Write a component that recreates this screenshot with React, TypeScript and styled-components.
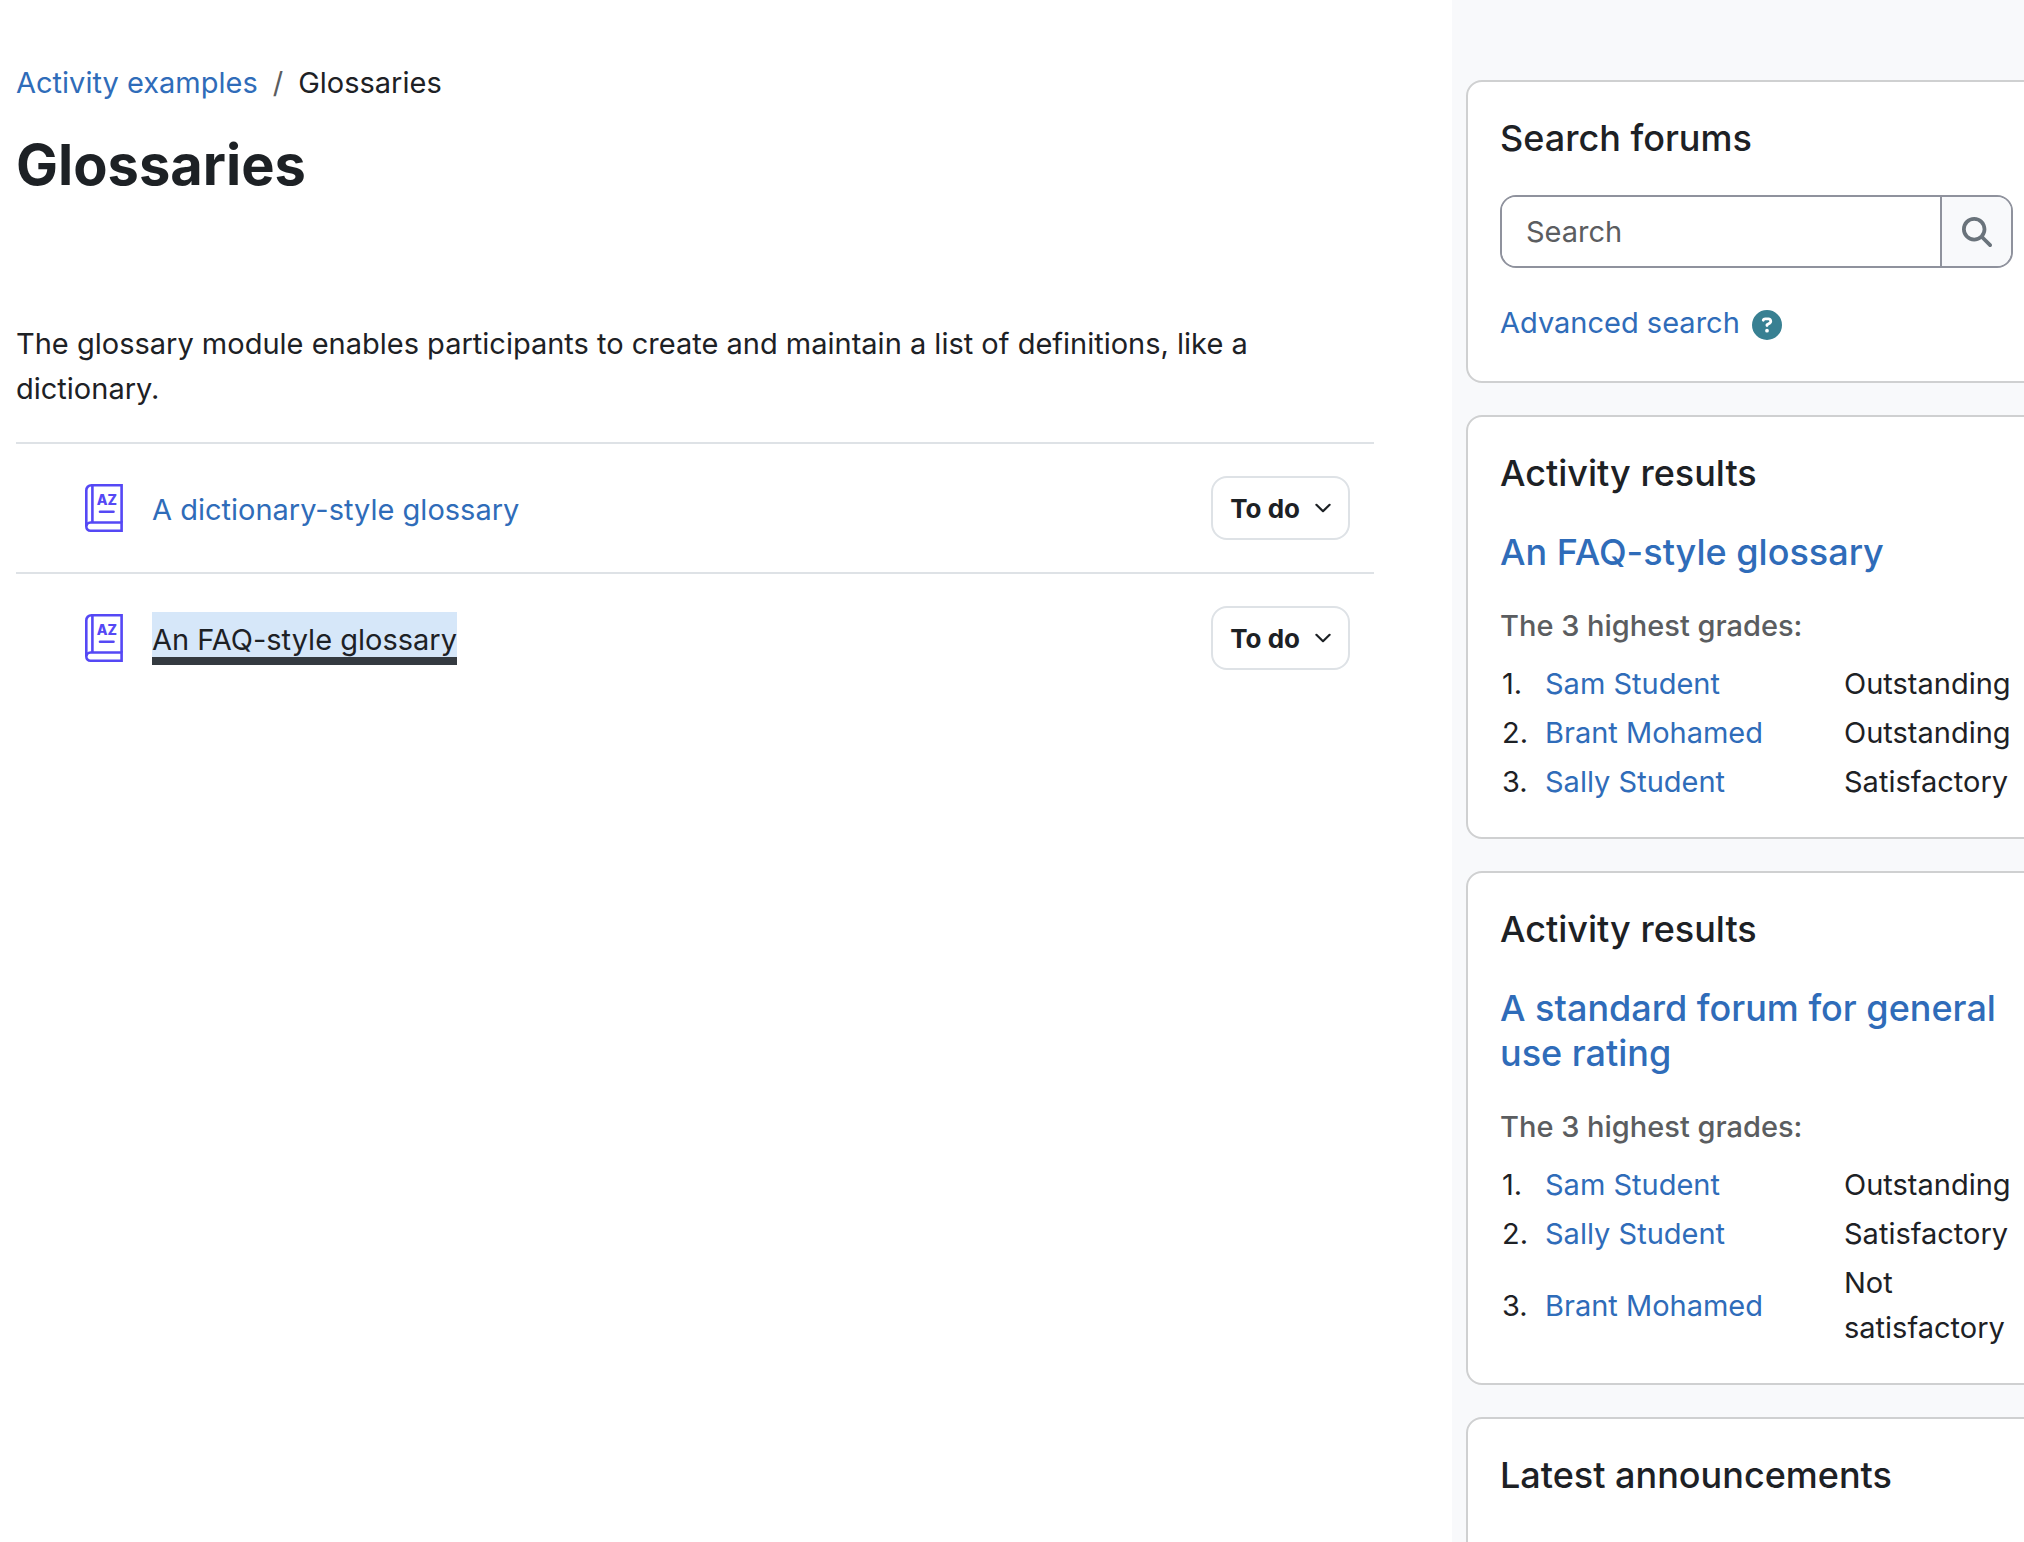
import React from "react";
import styled, { createGlobalStyle, css } from "styled-components";
import { FaCircleQuestion, FaMagnifyingGlass } from "react-icons/fa6";

const color = {
  text: "#1d2125",
  muted: "#5b5d60",
  link: "#2f6cb9",
  line: "#dee2e6",
  cardLine: "#cfd0d1",
  inputLine: "#8f929d",
  drawer: "#f8f9fb",
  activity: "#5548f5",
  help: "#388092",
};

const GlobalStyle = createGlobalStyle`
  *, *::before, *::after { box-sizing: border-box; }
  body {
    margin: 0;
    background: #fff;
    color: ${color.text};
    font-family: Inter, "Liberation Sans", sans-serif;
    font-size: 29px;
    line-height: 45px;
  }
  button, input { font: inherit; color: inherit; }
`;

const Page = styled.div`
  display: flex;
  align-items: stretch;
  height: 100vh;
  overflow: hidden;
`;

const Main = styled.main`
  flex: 1 1 0;
  min-width: 0;
  padding: 60px 78px 0 16px;
`;

const Link = styled.a`
  color: ${color.link};
  text-decoration: none;
`;

const Breadcrumb = styled.ol`
  display: flex;
  gap: 15px;
  margin: 0;
  padding: 0;
  list-style: none;

  li {
    display: flex;
    gap: 15px;
  }
  li + li::before {
    content: "/";
    color: ${color.muted};
  }
`;

const PageTitle = styled.h1`
  margin: 26px 0 0;
  font-size: 56px;
  line-height: 68px;
  font-weight: 700;
`;

const Intro = styled.p`
  margin: 122px 0 31px;
`;

const ActivityList = styled.ul`
  margin: 0;
  padding: 0;
  list-style: none;
`;

const ActivityRow = styled.li`
  display: flex;
  align-items: center;
  min-height: 130px;
  padding: 0 24px 0 69px;
  border-top: 2px solid ${color.line};
`;

const ActivityName = styled.div`
  flex: 1;
  margin-left: 29px;
  padding-top: 2px;
`;

const ActivityLink = styled(Link)<{ $focused?: boolean }>`
  ${({ $focused }) =>
    $focused &&
    css`
      color: ${color.text};
      background: #d6e7f9;
      box-shadow: 0 -10px #d6e7f9, 0 8px #343a40;
    `}
`;

const TodoButton = styled.button`
  display: flex;
  align-items: center;
  gap: 15px;
  height: 64px;
  padding: 0 17px;
  border: 2px solid ${color.line};
  border-radius: 16px;
  background: #fff;
  font-size: 26px;
  font-weight: 700;
`;

const Drawer = styled.aside`
  display: flex;
  flex-direction: column;
  flex: 0 0 572px;
  min-width: 0;
  gap: 32px;
  padding: 80px 0 0 14px;
  background: ${color.drawer};
`;

const Card = styled.section`
  flex: none;
  margin-right: -23px;
  padding: 34px 32px 31px;
  border: 2px solid ${color.cardLine};
  border-radius: 16px;
  background: #fff;
`;

const CardTitle = styled.h2`
  margin: 0 0 34px;
  font-size: 36px;
  line-height: 45px;
  font-weight: 500;
`;

const ResultTitle = styled.h3`
  margin: 0 0 28px;
  font-size: 36px;
  line-height: 45px;
  font-weight: 500;
`;

const SearchGroup = styled.form`
  display: flex;
  height: 73px;
  border: 2px solid ${color.inputLine};
  border-radius: 16px;
  overflow: hidden;
`;

const SearchInput = styled.input`
  flex: 1;
  min-width: 0;
  padding: 0 24px;
  border: 0;
  background: #fff;

  &::placeholder {
    color: ${color.muted};
    opacity: 1;
  }
`;

const SearchButton = styled.button`
  display: grid;
  place-items: center;
  flex: none;
  width: 71px;
  padding: 0;
  border: 0;
  border-left: 2px solid ${color.inputLine};
  background: ${color.drawer};
  color: #6a737b;
  font-size: 30px;
`;

const AdvancedRow = styled.div`
  display: flex;
  align-items: center;
  gap: 12px;
  margin: 32px 0 5px;
`;

const HelpButton = styled.button`
  display: flex;
  padding: 4px 0 0;
  border: 0;
  background: none;
  color: ${color.help};
  font-size: 30px;
`;

const GradeTable = styled.table`
  width: 100%;
  border-collapse: collapse;
  table-layout: fixed;

  caption {
    padding-bottom: 11px;
    color: ${color.muted};
    text-align: left;
    font-weight: 500;
  }
  td {
    padding: 2px;
    vertical-align: middle;
  }
  td:nth-child(1) { width: 43px; }
  td:nth-child(3) { width: 171px; }
`;

function GlossaryIcon() {
  return (
    <svg width="38" height="48" viewBox="0 0 38 48" fill="none" stroke={color.activity} strokeWidth="2.6" aria-hidden="true">
      <path d="M36.6 38.5V1.3H6.5C3.4 1.3 1.3 3.4 1.3 6.5V42" />
      <path d="M36.6 38.5H5.5C3 38.5 1.3 40.3 1.3 42.6S3 46.7 5.5 46.7H36.6Z" />
      <path d="M7.4 1.3V38.5" />
      <path d="M15 27.8H28.5" strokeLinecap="round" />
      <text x="21.9" y="21.2" textAnchor="middle" fontFamily="Inter, sans-serif" fontSize="14" fontWeight="800" fill={color.activity} stroke="none">
        AZ
      </text>
    </svg>
  );
}

function Chevron() {
  return (
    <svg width="16" height="10" viewBox="0 0 16 10" fill="none" stroke="currentColor" strokeWidth="2.2" strokeLinecap="round" strokeLinejoin="round" aria-hidden="true">
      <path d="M1.4 1.8L8 8.2L14.6 1.8" />
    </svg>
  );
}

function Activity({ name, focused }: { name: string; focused?: boolean }) {
  return (
    <ActivityRow>
      <GlossaryIcon />
      <ActivityName>
        <ActivityLink href="#" $focused={focused}>{name}</ActivityLink>
      </ActivityName>
      <TodoButton type="button">
        To do
        <Chevron />
      </TodoButton>
    </ActivityRow>
  );
}

function ResultsCard({ activity, grades }: { activity: string; grades: [string, string][] }) {
  return (
    <Card>
      <CardTitle>Activity results</CardTitle>
      <ResultTitle>
        <Link href="#">{activity}</Link>
      </ResultTitle>
      <GradeTable>
        <caption>The 3 highest grades:</caption>
        <tbody>
          {grades.map(([student, grade], i) => (
            <tr key={student}>
              <td>{i + 1}.</td>
              <td><Link href="#">{student}</Link></td>
              <td>{grade}</td>
            </tr>
          ))}
        </tbody>
      </GradeTable>
    </Card>
  );
}

export default function App() {
  return (
    <Page>
      <GlobalStyle />
      <Main>
        <nav aria-label="Breadcrumb">
          <Breadcrumb>
            <li><Link href="#">Activity examples</Link></li>
            <li>Glossaries</li>
          </Breadcrumb>
        </nav>
        <PageTitle>Glossaries</PageTitle>
        <Intro>
          The glossary module enables participants to create and maintain a list of definitions, like a dictionary.
        </Intro>
        <ActivityList>
          <Activity name="A dictionary-style glossary" />
          <Activity name="An FAQ-style glossary" focused />
        </ActivityList>
      </Main>
      <Drawer>
        <Card>
          <CardTitle>Search forums</CardTitle>
          <SearchGroup role="search">
            <SearchInput type="text" placeholder="Search" aria-label="Search" />
            <SearchButton type="button" aria-label="Search forums">
              <FaMagnifyingGlass />
            </SearchButton>
          </SearchGroup>
          <AdvancedRow>
            <Link href="#">Advanced search</Link>
            <HelpButton type="button" aria-label="Help">
              <FaCircleQuestion />
            </HelpButton>
          </AdvancedRow>
        </Card>
        <ResultsCard
          activity="An FAQ-style glossary"
          grades={[
            ["Sam Student", "Outstanding"],
            ["Brant Mohamed", "Outstanding"],
            ["Sally Student", "Satisfactory"],
          ]}
        />
        <ResultsCard
          activity="A standard forum for general use rating"
          grades={[
            ["Sam Student", "Outstanding"],
            ["Sally Student", "Satisfactory"],
            ["Brant Mohamed", "Not satisfactory"],
          ]}
        />
        <Card>
          <CardTitle>Latest announcements</CardTitle>
        </Card>
      </Drawer>
    </Page>
  );
}
